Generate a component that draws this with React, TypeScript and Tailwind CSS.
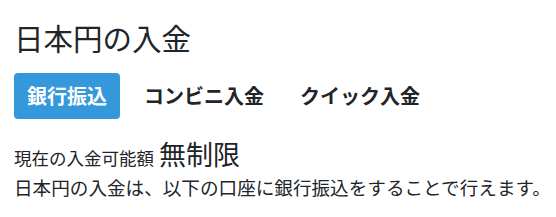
export default function App() {
  const tabs = ['銀行振込', 'コンビニ入金', 'クイック入金'];
  const active = 0;

  return (
    <div
      className="bg-white text-[#212529] pl-[14px] pt-[17px]"
      style={{ fontFamily: '"Noto Sans CJK JP", "Noto Sans", sans-serif' }}
    >
      <h1 className="text-[29.5px] leading-[40px] font-normal">日本円の入金</h1>

      <div className="flex gap-3 mt-[16px]">
        {tabs.map((t, i) => (
          <button
            key={t}
            className={
              i === active
                ? 'h-[46px] px-[13px] rounded-[4px] bg-[#3498db] text-white text-[20px] font-bold'
                : 'h-[46px] px-[12px] rounded-[4px] text-[#212529] text-[20px] font-bold'
            }
          >
            {t}
          </button>
        ))}
      </div>

      <div className="flex items-baseline mt-[17px]">
        <span className="text-[17.5px]">現在の入金可能額</span>
        <span className="text-[27px] ml-[5px] leading-[36px]">無制限</span>
      </div>

      <p className="text-[18.6px] leading-[30px] whitespace-nowrap">
        日本円の入金は、以下の口座に銀行振込をすることで行えます。
      </p>
    </div>
  );
}
